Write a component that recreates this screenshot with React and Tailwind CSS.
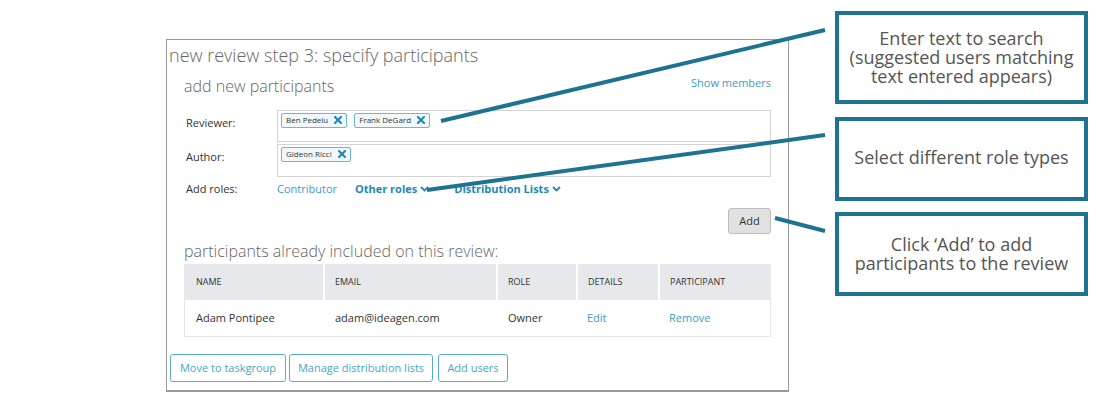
// App.jsx — review participants step with callout annotations.

const TEAL = '#1e7490';

function Chip({ name }) {
  return (
    <span className="inline-flex items-center h-[15px] px-[4px] gap-[6px] border border-[#6bb8d2] bg-[#f1f8fb] rounded-[2px] text-[8px] text-[#333]">
      <span>{name}</span>
      <svg width="8" height="8" viewBox="0 0 8 8" className="text-[#1a86b3]">
        <path d="M1 1 L7 7 M7 1 L1 7" stroke="currentColor" strokeWidth="2" strokeLinecap="square" />
      </svg>
    </span>
  );
}

function Chevron() {
  return (
    <svg width="9" height="6" viewBox="0 0 9 6" className="ml-[3px] inline-block">
      <path d="M1 1 L4.5 4.5 L8 1" fill="none" stroke="currentColor" strokeWidth="1.8" />
    </svg>
  );
}

function Callout({ children, className = '' }) {
  return (
    <div className={`w-[253px] border-[4px] border-[#1e7490] bg-white flex items-center justify-center text-center text-[18px] leading-[19px] text-[#555] ${className}`}>
      {children}
    </div>
  );
}

const COLS = [
  { key: 'name', label: 'NAME', w: 'w-[139px]' },
  { key: 'email', label: 'EMAIL', w: 'w-[173px]' },
  { key: 'role', label: 'ROLE', w: 'w-[80px]' },
  { key: 'details', label: 'DETAILS', w: 'w-[82px]' },
  { key: 'part', label: 'PARTICIPANT', w: 'flex-1' },
];

export default function App() {
  return (
    <div className="relative w-[1097px] h-[400px] bg-white overflow-hidden font-['Open_Sans',sans-serif]">
      <div className="flex items-start">
        {/* main panel */}
        <div className="ml-[166px] mt-[39px] w-[623px] h-[353px] border border-[#9a9a9a] border-b-2 flex flex-col">
          <div className="pl-[2px] pt-[3px] text-[18px] leading-[24px] text-[#666] font-light">new review step 3: specify participants</div>

          <div className="px-[17px]">
            <div className="flex items-end justify-between mt-[8px]">
              <div className="text-[16px] leading-[20px] text-[#666] font-light">add new participants</div>
              <div className="text-[11px] text-[#3a9dc6] mb-[4px]">Show members</div>
            </div>

            <div className="mt-[14px] flex flex-col gap-[2px]">
              <div className="flex">
                <div className="w-[93px] pl-[2px] pt-[5px] text-[11px] text-[#333]">Reviewer:</div>
                <div className="flex-1 h-[32px] border border-[#d4d4d4] pl-[3px] pt-[2px] flex items-start gap-[7px]">
                  <Chip name="Ben Pedelu" />
                  <Chip name="Frank DeGard" />
                </div>
              </div>
              <div className="flex">
                <div className="w-[93px] pl-[2px] pt-[5px] text-[11px] text-[#333]">Author:</div>
                <div className="flex-1 h-[33px] border border-[#d4d4d4] pl-[3px] pt-[2px] flex items-start">
                  <Chip name="Gideon Ricci" />
                </div>
              </div>
            </div>

            <div className="flex items-center mt-[4px] text-[11px]">
              <div className="w-[93px] pl-[2px] text-[#333]">Add roles:</div>
              <span className="text-[#3a9dc6]">Contributor</span>
              <span className="ml-[18px] font-bold text-[#1c8ab6] flex items-center">Other roles<Chevron /></span>
              <span className="ml-[25px] font-bold text-[#1c8ab6] flex items-center">Distribution Lists<Chevron /></span>
            </div>

            <div className="flex justify-end mt-[11px]">
              <button className="w-[43px] h-[26px] bg-[#e1e1e1] border border-[#bdbdbd] rounded-[3px] text-[11px] text-[#333]">Add</button>
            </div>

            <div className="mt-[7px] text-[16px] leading-[20px] text-[#666] font-light">participants already included on this review:</div>

            <div className="mt-[3px]">
              <div className="flex h-[36px] bg-[#e6e8eb] text-[9px] text-[#333]">
                {COLS.map((c, i) => (
                  <div key={c.key} className={`${c.w} flex items-center ${i > 0 ? 'border-l-2 border-white pl-[10px]' : 'pl-[12px]'}`}>{c.label}</div>
                ))}
              </div>
              <div className="flex h-[37px] border border-t-0 border-[#e4e6e8] text-[11px] text-[#333]">
                <div className="w-[139px] flex items-center pl-[11px]">Adam Pontipee</div>
                <div className="w-[173px] flex items-center pl-[11px]">adam@ideagen.com</div>
                <div className="w-[80px] flex items-center pl-[11px]">Owner</div>
                <div className="w-[82px] flex items-center pl-[10px] text-[#3a9dc6]">Edit</div>
                <div className="flex-1 flex items-center pl-[10px] text-[#3a9dc6]">Remove</div>
              </div>
            </div>
          </div>

          <div className="flex pl-[3px] mt-[17px] text-[11px] text-[#4aa3c9]">
            <button className="w-[116px] h-[28px] border border-[#58acd0] rounded-[3px]">Move to taskgroup</button>
            <button className="ml-[3px] w-[144px] h-[28px] border border-[#58acd0] rounded-[3px]">Manage distribution lists</button>
            <button className="ml-[5px] w-[70px] h-[28px] border border-[#58acd0] rounded-[3px]">Add users</button>
          </div>
        </div>

        {/* callouts */}
        <div className="ml-[46px] mt-[11px] flex flex-col">
          <Callout className="h-[93px]">
            <div>Enter text to search<br />(suggested users matching<br />text entered appears)</div>
          </Callout>
          <Callout className="h-[84px] mt-[13px]">
            <div className="-mt-[3px]">Select different role types</div>
          </Callout>
          <Callout className="h-[84px] mt-[11px]">
            <div>Click ‘Add’ to add<br />participants to the review</div>
          </Callout>
        </div>
      </div>

      {/* connector lines over the content */}
      <svg className="absolute inset-0 pointer-events-none" width="1097" height="400">
        <g stroke={TEAL} strokeWidth="4" strokeLinecap="butt">
          <line x1="441" y1="121" x2="825" y2="30" />
          <line x1="427" y1="190" x2="825" y2="135" />
          <line x1="775" y1="218" x2="825" y2="231" />
        </g>
      </svg>
    </div>
  );
}
